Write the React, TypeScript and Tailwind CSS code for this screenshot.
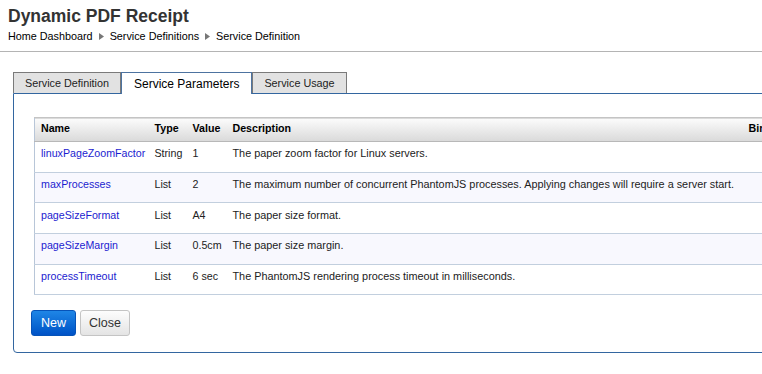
import React from "react";

const rows = [
  { name: "linuxPageZoomFactor", type: "String", value: "1", desc: "The paper zoom factor for Linux servers." },
  { name: "maxProcesses", type: "List", value: "2", desc: "The maximum number of concurrent PhantomJS processes. Applying changes will require a server start." },
  { name: "pageSizeFormat", type: "List", value: "A4", desc: "The paper size format." },
  { name: "pageSizeMargin", type: "List", value: "0.5cm", desc: "The paper size margin." },
  { name: "processTimeout", type: "List", value: "6 sec", desc: "The PhantomJS rendering process timeout in milliseconds." },
];

function Crumb() {
  return (
    <svg width="5" height="7" viewBox="0 0 5 7" className="mx-[6px] inline-block">
      <path d="M0 0 L5 3.5 L0 7 Z" fill="#777" />
    </svg>
  );
}

export default function App() {
  return (
    <div className="w-[762px] h-[374px] overflow-hidden bg-white font-['Liberation_Sans',Arial,sans-serif]">
      <div className="w-[900px]">
        {/* header */}
        <div className="pl-[8px] pt-[6px] pb-[8px] border-b border-[#b4b4b4]">
          <h1 className="text-[17.5px] leading-[20px] font-bold text-[#333]">Dynamic PDF Receipt</h1>
          <div className="mt-[3px] flex items-center text-[10.8px] leading-[14px] text-black">
            <span>Home Dashboard</span>
            <Crumb />
            <span>Service Definitions</span>
            <Crumb />
            <span>Service Definition</span>
          </div>
        </div>

        {/* tabs */}
        <div className="ml-[13px] mt-[20px] flex items-end">
          <div className="h-[21px] px-[11px] flex items-center bg-[#e2e2e2] border border-b-0 border-[#7a7a7a] text-[10.8px] text-[#222]">
            Service Definition
          </div>
          <div className="relative z-10 -mb-px h-[22px] px-[12px] flex items-center bg-white border border-b-0 border-[#4d73a0] text-[12px] text-black">
            Service Parameters
          </div>
          <div className="h-[21px] px-[11px] flex items-center bg-[#e2e2e2] border border-b-0 border-[#7a7a7a] text-[10.8px] text-[#222]">
            Service Usage
          </div>
        </div>

        {/* panel */}
        <div className="ml-[13px] w-[880px] border border-[#3366a0] rounded-b-[4px] pt-[23px] pb-[16px]">
          <table className="ml-[20px] w-[850px] table-fixed border-collapse text-[10.67px]">
            <colgroup>
              <col className="w-[114px]" />
              <col className="w-[38px]" />
              <col className="w-[40px]" />
              <col className="w-[516px]" />
              <col />
            </colgroup>
            <thead>
              <tr className="bg-gradient-to-b from-[#fbfbfb] to-[#dadada] border-t border-[#c4c4c4] border-b border-b-[#b8b8b8] border-l border-l-[#b8c6d8]">
                <th className="h-[24px] pl-[6px] pb-[3px] text-left font-bold text-black">Name</th>
                <th className="pl-[6px] pb-[3px] text-left font-bold text-black">Type</th>
                <th className="pl-[6px] pb-[3px] text-left font-bold text-black">Value</th>
                <th className="pl-[6px] pb-[3px] text-left font-bold text-black">Description</th>
                <th className="pl-[6px] pb-[3px] text-left font-bold text-black">Binding</th>
              </tr>
            </thead>
            <tbody>
              {rows.map((r, i) => (
                <tr
                  key={r.name}
                  className={`border-l border-l-[#b8c6d8] border-b border-b-[#c2cfde] ${i % 2 === 1 ? "bg-[#f8f8fe]" : "bg-white"}`}
                >
                  <td className="h-[30.7px] pl-[6px] pb-[7px] text-[#1c1cd0] whitespace-nowrap">{r.name}</td>
                  <td className="pl-[6px] pb-[7px] text-[#222]">{r.type}</td>
                  <td className="pl-[6px] pb-[7px] text-[#222] whitespace-nowrap">{r.value}</td>
                  <td className="pl-[6px] pb-[7px] text-[10.85px] text-[#222] whitespace-nowrap">{r.desc}</td>
                  <td className="pl-[6px]"></td>
                </tr>
              ))}
            </tbody>
          </table>

          <div className="ml-[17px] mt-[15px] flex gap-[4px]">
            <button className="h-[26px] w-[45px] rounded-[3px] border border-[#0653b8] bg-gradient-to-b from-[#1f86e6] to-[#0152c6] text-[12.5px] text-white">
              New
            </button>
            <button className="h-[26px] w-[50px] rounded-[3px] border border-[#c4c4c4] bg-gradient-to-b from-[#fdfdfd] to-[#e4e4e4] text-[12.5px] text-[#333]">
              Close
            </button>
          </div>
        </div>
      </div>
    </div>
  );
}
